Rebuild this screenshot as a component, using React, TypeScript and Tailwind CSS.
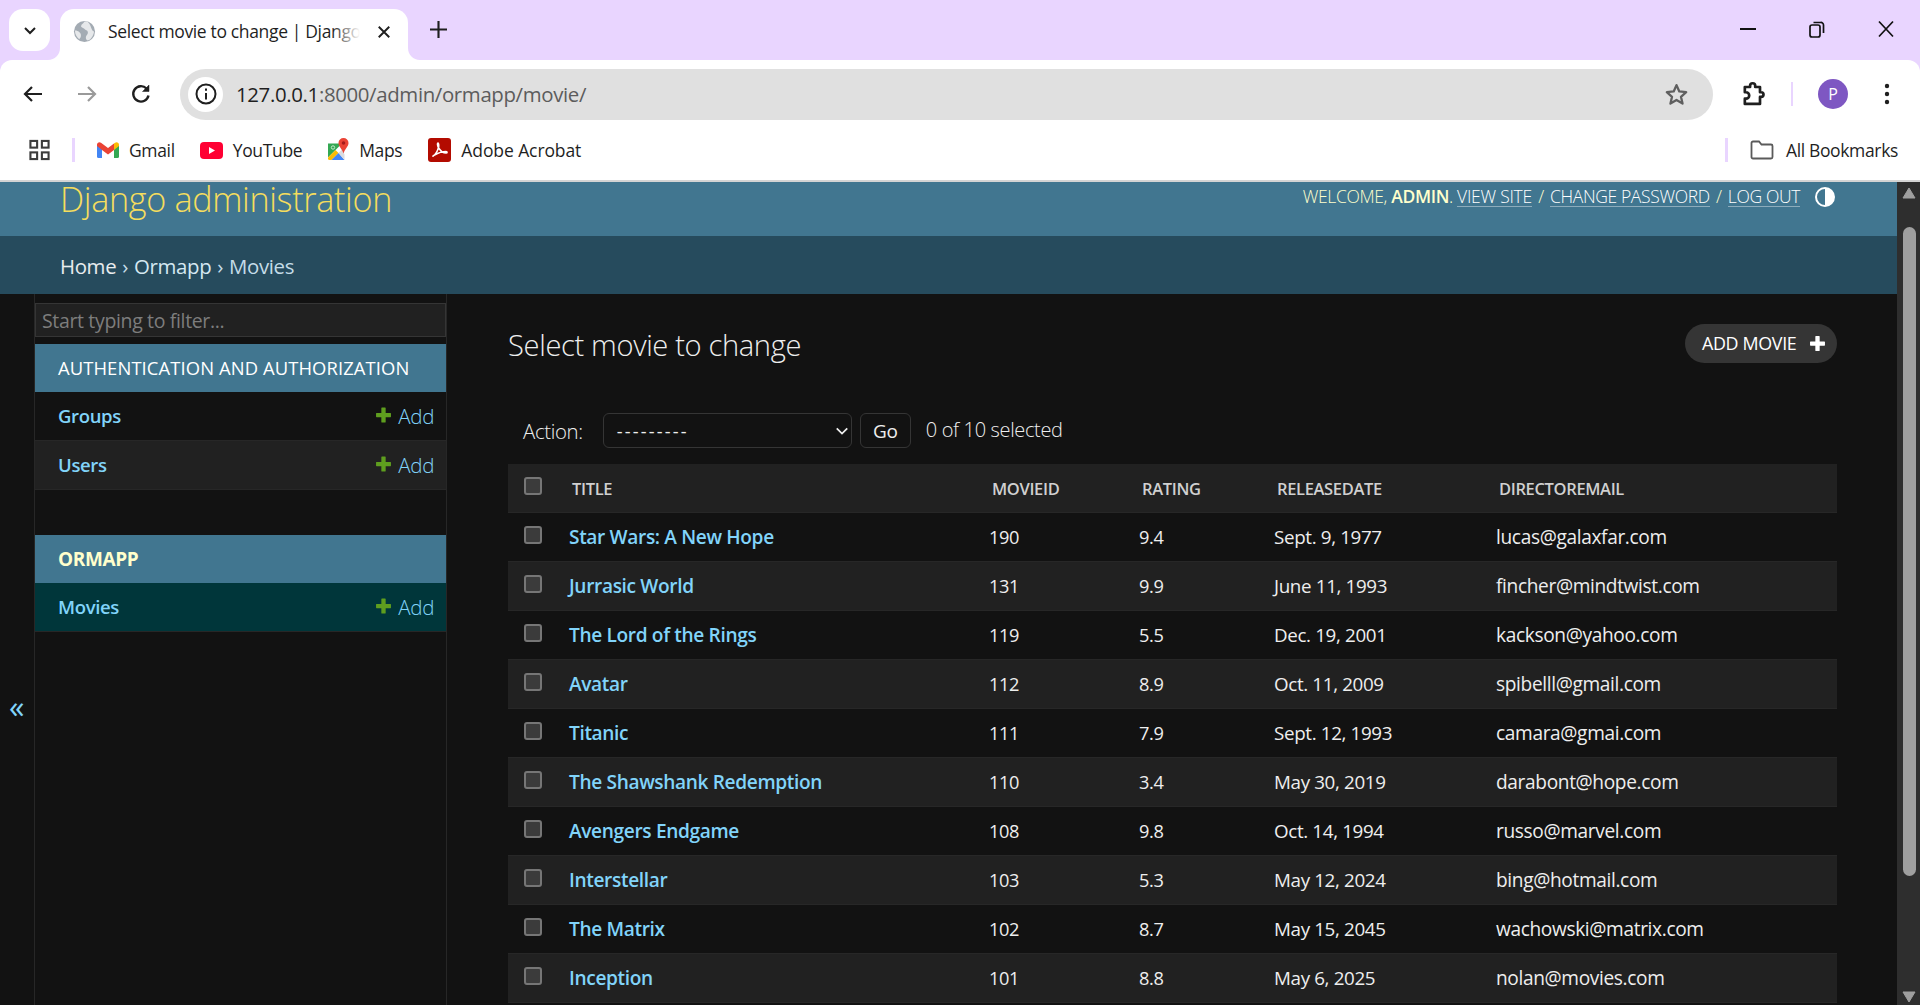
import React from "react";

const movies = [
  ["Star Wars: A New Hope", "190", "9.4", "Sept. 9, 1977", "lucas@galaxfar.com"],
  ["Jurrasic World", "131", "9.9", "June 11, 1993", "fincher@mindtwist.com"],
  ["The Lord of the Rings", "119", "5.5", "Dec. 19, 2001", "kackson@yahoo.com"],
  ["Avatar", "112", "8.9", "Oct. 11, 2009", "spibelll@gmail.com"],
  ["Titanic", "111", "7.9", "Sept. 12, 1993", "camara@gmai.com"],
  ["The Shawshank Redemption", "110", "3.4", "May 30, 2019", "darabont@hope.com"],
  ["Avengers Endgame", "108", "9.8", "Oct. 14, 1994", "russo@marvel.com"],
  ["Interstellar", "103", "5.3", "May 12, 2024", "bing@hotmail.com"],
  ["The Matrix", "102", "8.7", "May 15, 2045", "wachowski@matrix.com"],
  ["Inception", "101", "8.8", "May 6, 2025", "nolan@movies.com"],
];

function Plus({ className, color }: { className: string; color: string }) {
  return (
    <svg viewBox="0 0 16 16" className={className}>
      <path d="M6.500 1.500h3v5h5v3h-5v5h-3v-5h-5v-3h5z" fill={color} stroke={color} strokeLinejoin="round" strokeWidth="1" />
    </svg>
  );
}

function Checkbox() {
  return <span className="block w-[18px] h-[18px] rounded-[3px] bg-[#3b3b3b] border-2 border-[#767676]" />;
}

function NavRow({ label, alt, selected }: { label: string; alt?: boolean; selected?: boolean }) {
  return (
    <div className={`flex items-center justify-between h-[49px] pl-[23px] pr-[12px] border-b border-[#272727] ${selected ? "bg-[#00363a]" : alt ? "bg-[#212121]" : "bg-[#121212]"}`}>
      <span className="text-[#81d4fa] text-[18.5px] font-semibold">{label}</span>
      <span className="flex items-center gap-[6px] text-[#81d4fa] text-[20.5px] font-light">
        <Plus className="w-[17px] h-[18px] -mt-[3px]" color="#5f9e1f" />
        Add
      </span>
    </div>
  );
}

function Bookmark({ icon, label, className }: { icon: React.ReactNode; label: string; className: string }) {
  return (
    <span className={`flex items-center gap-[10px] text-[#1f1f1f] text-[17.5px] ${className}`}>
      {icon}
      {label}
    </span>
  );
}

export default function App() {
  return (
    <div className="h-[1005px] w-[1920px] overflow-hidden flex flex-col bg-[#121212] font-['Open_Sans','Noto_Sans',sans-serif] tracking-[-0.35px]">
      {/* tab strip */}
      <div className="h-[60px] shrink-0 bg-[#e9d5ff] flex items-end relative">
        <div className="absolute left-[9px] top-[9px] w-[41px] h-[42px] rounded-[14px] bg-white flex items-center justify-center">
          <svg viewBox="0 0 16 16" className="w-[16px] h-[16px]" fill="none" stroke="#1f1f1f" strokeWidth="2"><path d="M3 6l5 5 5-5" /></svg>
        </div>
        <div className="ml-[60px] w-[348px] h-[51px] bg-white rounded-t-[14px] flex items-center pl-[13px] relative">
          <svg viewBox="0 0 16 16" className="absolute -left-[12px] bottom-0 w-[12px] h-[12px]"><path d="M16 0v16H0C9 16 16 9 16 0z" fill="#fff" /></svg>
          <svg viewBox="0 0 16 16" className="absolute -right-[12px] bottom-0 w-[12px] h-[12px]"><path d="M0 0v16h16C7 16 0 9 0 0z" fill="#fff" /></svg>
          <svg viewBox="0 0 24 24" className="w-[23px] h-[23px] shrink-0 -mt-[6px]">
            <circle cx="12" cy="12" r="11" fill="#a3abb3" />
            <path d="M12 1.500c-1 2-3 2.500-3.500 4.500S11 8 12 9.500s3 1 3.500 3-1.500 3-2 5 .5 3.500 2 4c3-1 6-5 6.500-9.500-1 0-2-1-2.500-2.500S18 5 16.500 3 14 1.500 12 1.500zM2 11c2 0 3.500.5 5 2s1.500 3 1 5l-1.500 2C4 18 2 15 2 11z" fill="#e6e8ea" />
          </svg>
          <div className="relative w-[252px] ml-[12px] overflow-hidden whitespace-nowrap text-[17.5px] text-[#1f1f1f] -mt-[6px]">
            Select movie to change | Django administration
            <div className="absolute right-0 top-0 bottom-0 w-[28px] bg-gradient-to-r from-transparent to-white" />
          </div>
          <svg viewBox="0 0 16 16" className="w-[14px] h-[14px] ml-[17px] -mt-[6px]" stroke="#1f1f1f" strokeWidth="2.200"><path d="M2 2l12 12M14 2L2 14" /></svg>
        </div>
        <svg viewBox="0 0 16 16" className="absolute left-[430px] top-[21px] w-[17px] h-[17px]" stroke="#1f1f1f" strokeWidth="2"><path d="M8 0v16M0 8h16" /></svg>
        <div className="ml-auto h-full flex items-start pr-[26px] pt-[20px] gap-[53px]">
          <div className="w-[16px] h-[18px] flex items-center"><div className="w-[16px] h-[2px] bg-[#111]" /></div>
          <svg viewBox="0 0 16 18" className="w-[16px] h-[18px]" fill="none" stroke="#111" strokeWidth="1.700"><rect x="1" y="5" width="10" height="12" rx="2" /><path d="M4.500 2.500h7A2.500 2.500 0 0 1 14.500 5v8" /></svg>
          <svg viewBox="0 0 16 18" className="w-[16px] h-[18px]" fill="none" stroke="#111" strokeWidth="1.700"><path d="M1 1.500l14 15M15 1.500l-14 15" /></svg>
        </div>
      </div>

      {/* toolbar */}
      <div className="h-[60px] shrink-0 bg-[#e9d5ff]">
        <div className="h-full bg-white rounded-t-[12px] flex items-center pt-[8px]">
          <svg viewBox="0 0 24 24" className="w-[24px] h-[24px] ml-[21px]" fill="none" stroke="#1f1f1f" strokeWidth="2.200"><path d="M21 12H4M11 5l-7 7 7 7" /></svg>
          <svg viewBox="0 0 24 24" className="w-[24px] h-[24px] ml-[30px]" fill="none" stroke="#9a9a9a" strokeWidth="2.200"><path d="M3 12h17M13 5l7 7-7 7" /></svg>
          <svg viewBox="0 0 24 24" className="w-[24px] h-[24px] ml-[30px]" fill="none" stroke="#1f1f1f" strokeWidth="2.400"><path d="M19.500 13.500A7.700 7.700 0 1 1 17.500 6.500" /><path d="M20 3v6.500h-6.500z" fill="#1f1f1f" strokeWidth="0.500" /></svg>
          <div className="w-[1533px] h-[51px] ml-[27px] rounded-full bg-[#e0e0e0] flex items-center pl-[8px] pr-[24px]">
            <div className="w-[35px] h-[35px] rounded-full bg-white flex items-center justify-center">
              <svg viewBox="0 0 24 24" className="w-[24px] h-[24px]" fill="none" stroke="#1f1f1f" strokeWidth="2"><circle cx="12" cy="12" r="9.500" /><path d="M12 11v6.500" /><path d="M12 6.500v2.200" /></svg>
            </div>
            <span className="ml-[13px] text-[20.4px] text-[#1f1f1f]">127.0.0.1<span className="text-[#5c5c5c]">:8000/admin/ormapp/movie/</span></span>
            <svg viewBox="0 0 24 24" className="w-[25px] h-[25px] ml-auto" fill="none" stroke="#5f5f5f" strokeWidth="2.200" strokeLinejoin="round"><path d="M12 3l2.700 6.100 6.600.7-5 4.400 1.500 6.500L12 17.300l-5.800 3.400 1.500-6.500-5-4.400 6.600-.7z" /></svg>
          </div>
          <svg viewBox="0 0 24 24" className="w-[28px] h-[28px] ml-[26px]" fill="none" stroke="#1f1f1f" strokeWidth="2.300" strokeLinejoin="round"><path d="M5 6h4.500V5a2.200 2.200 0 0 1 4.400 0v1H18v4.500h1a2 2 0 0 1 0 4h-1V20.500H5V16h1a2.500 2.500 0 0 0 0-5.500H5z" /></svg>
          <div className="w-[2px] h-[24px] bg-[#e9d5ff] ml-[24px]" />
          <div className="w-[30px] h-[30px] rounded-full bg-[#7e57c2] text-white text-[16px] flex items-center justify-center ml-[25px]">P</div>
          <svg viewBox="0 0 8 24" className="w-[8px] h-[24px] ml-[35px]" fill="#1f1f1f"><circle cx="4" cy="4" r="2.200" /><circle cx="4" cy="12" r="2.200" /><circle cx="4" cy="20" r="2.200" /></svg>
        </div>
      </div>

      {/* bookmarks */}
      <div className="h-[60px] shrink-0 bg-white flex items-center pl-[29px]">
        <svg viewBox="0 0 22 22" className="w-[21px] h-[22px]" fill="none" stroke="#3c3c3c" strokeWidth="2.200"><rect x="1.500" y="1.500" width="7" height="7" /><rect x="13.500" y="1.500" width="7" height="7" /><rect x="1.500" y="13.500" width="7" height="7" /><rect x="13.500" y="13.500" width="7" height="7" /></svg>
        <div className="w-[3px] h-[24px] bg-[#e9d5ff] ml-[22px]" />
        <Bookmark
          className="ml-[22px]"
          label="Gmail"
          icon={
            <svg viewBox="0 0 22 16" className="w-[22px] h-[16px]">
              <path d="M0 3v11.500A1.500 1.500 0 0 0 1.500 16H5V7z" fill="#4285f4" />
              <path d="M22 3v11.500a1.500 1.500 0 0 1-1.500 1.500H17V7z" fill="#34a853" />
              <path d="M5 8L0 4V2.500C0 .5 2.300-.6 4 .7L11 6l6-4.500V8l-6 4.500z" fill="#ea4335" />
              <path d="M17 1.500L18 .7c1.700-1.300 4-.2 4 1.800V4l-5 4z" fill="#fbbc04" />
            </svg>
          }
        />
        <Bookmark
          className="ml-[25px]"
          label="YouTube"
          icon={
            <svg viewBox="0 0 23 17" className="w-[23px] h-[17px]"><rect width="23" height="17" rx="4" fill="#ff0033" /><path d="M9 5l6 3.500L9 12z" fill="#fff" /></svg>
          }
        />
        <Bookmark
          className="ml-[25px]"
          label="Maps"
          icon={
            <svg viewBox="0 0 22 24" className="w-[22px] h-[24px]">
              <path d="M1 5.500h14l-14 14z" fill="#34a853" />
              <path d="M1 19.500L8.500 12l3 3-7 7H2.500A1.500 1.500 0 0 1 1 20.500z" fill="#fbbc04" />
              <path d="M4.500 22l7-7 6 7z" fill="#4285f4" />
              <path d="M11.500 15l3.500-3.500 2.500 5v5.500z" fill="#dadce0" />
              <circle cx="6" cy="9.500" r="1.700" fill="none" stroke="#c9e7cf" strokeWidth="1" />
              <path d="M16.500 0a5 5 0 0 1 5 5c0 3.500-3.500 5.500-5 10.500C15 10.500 11.500 8.500 11.500 5a5 5 0 0 1 5-5z" fill="#ea4335" />
              <circle cx="16.500" cy="5" r="1.800" fill="#a61c1c" />
            </svg>
          }
        />
        <Bookmark
          className="ml-[26px] tracking-[-0.1px]"
          label="Adobe Acrobat"
          icon={
            <svg viewBox="0 0 23 24" className="w-[23px] h-[24px]">
              <rect width="23" height="24" rx="3" fill="#b30b00" />
              <path d="M5 18c2-1 4.500-5 5.500-8.500.6-2 .2-4.500-.5-4.500s-1 2.500 1 5.500 4 4.500 7 4.500c1.500 0 1.500-1.500 0-1.500-3.500 0-8.500 1.800-11.500 3.500-1.500 1-1.800 1.500-1.500 1z" fill="none" stroke="#fff" strokeWidth="1.500" />
            </svg>
          }
        />
        <div className="w-[3px] h-[24px] bg-[#e9d5ff] ml-auto" />
        <span className="flex items-center gap-[12px] text-[#1f1f1f] text-[17.5px] ml-[22px] mr-[22px]">
          <svg viewBox="0 0 24 20" className="w-[24px] h-[20px]" fill="none" stroke="#5a5a5a" strokeWidth="1.800"><path d="M1.500 3A1.500 1.500 0 0 1 3 1.500h6l2.500 3H21A1.500 1.500 0 0 1 22.500 6v11a1.500 1.500 0 0 1-1.500 1.500H3A1.500 1.500 0 0 1 1.500 17z" /></svg>
          All Bookmarks
        </span>
      </div>

      {/* page */}
      <div className="flex-1 min-h-0 flex border-t-2 border-[#d4d4d4]">
        <div className="flex-1 min-w-0 flex flex-col">
          <header className="h-[54px] shrink-0 bg-[#417690] flex items-start justify-between pl-[60px] pr-[62px]">
            <div className="text-[#f5dd5d] text-[34.2px] font-light leading-[36px] -mt-[1px]">Django administration</div>
            <div className="flex items-center h-[28px] text-[#ffffcc] text-[17.5px] font-light uppercase">
              <span>Welcome, <span className="font-semibold">admin</span>.&nbsp;</span>
              <span className="text-white border-b border-white/40 leading-[20px] tracking-[-0.25px]">View site</span>
              <span className="px-[2px]">&nbsp;/&nbsp;</span>
              <span className="text-white border-b border-white/40 leading-[20px]">Change password</span>
              <span className="px-[2px]">&nbsp;/&nbsp;</span>
              <span className="text-white border-b border-white/40 leading-[20px]">Log out</span>
              <span className="w-[20px] h-[20px] ml-[15px] mt-[2px] rounded-full border-2 border-white bg-gradient-to-r from-transparent from-50% to-white to-50%" />
            </div>
          </header>
          <div className="h-[58px] shrink-0 bg-[#264b5d] flex items-center pl-[60px] pt-[3px] text-[20.4px] text-[#c4dce8]">
            <span className="text-white/90">Home</span>
            <span className="mx-[6px] text-[#c4dce8]">›</span>
            <span className="text-[#d5e8f2]">Ormapp</span>
            <span className="mx-[6px]">›</span>
            <span>Movies</span>
          </div>
          <div className="flex-1 min-h-0 flex">
            {/* toggle */}
            <div className="w-[35px] shrink-0 border-r border-[#272727] flex items-center justify-center">
              <span className="text-[#81d4fa] text-[31px] leading-none mt-[114px] pr-[1px]">«</span>
            </div>
            {/* sidebar */}
            <aside className="w-[412px] shrink-0 border-r border-[#272727] pt-[9px]">
              <div className="h-[34px] bg-[#212121] border border-[#353535] flex items-center pl-[6px] pt-[1px] text-[19.5px] text-[#7d7d7d]">Start typing to filter...</div>
              <div className="h-[48px] mt-[7px] bg-[#417690] flex items-center pl-[23px] text-[18.4px] text-white uppercase tracking-[0.1px]">Authentication and Authorization</div>
              <NavRow label="Groups" />
              <NavRow label="Users" alt />
              <div className="h-[48px] mt-[45px] bg-[#417690] flex items-center pl-[23px] text-[19px] font-bold text-[#ffffcc] uppercase">Ormapp</div>
              <NavRow label="Movies" selected />
            </aside>
            {/* content */}
            <main className="flex-1 min-w-0 pl-[61px] pr-[60px] pt-[30px]">
              <div className="flex items-center justify-between h-[39px]">
                <h1 className="text-[#eeeeee] text-[29.1px] font-light leading-[39px] mt-[3px]">Select movie to change</h1>
                <div className="w-[152px] h-[39px] rounded-full bg-[#353535] flex items-center justify-between pl-[17px] pr-[11px] text-white text-[17.9px] uppercase">
                  Add movie
                  <Plus className="w-[17px] h-[17px]" color="#fff" />
                </div>
              </div>
              <div className="flex items-center h-[35px] mt-[50px] pl-[15px] text-[#eeeeee]">
                <span className="text-[20.4px] font-light mt-[1px]">Action:</span>
                <div className="w-[249px] h-[35px] ml-[20px] rounded-[6px] border border-[#353535] flex items-center justify-between pl-[13px] pr-[2px] pt-[1px] text-[18px] tracking-[2.2px]">
                  ---------
                  <svg viewBox="0 0 16 16" className="w-[14px] h-[14px]" fill="none" stroke="#eee" strokeWidth="2"><path d="M2 5l6 6 6-6" /></svg>
                </div>
                <div className="w-[51px] h-[35px] ml-[8px] rounded-[6px] border border-[#353535] flex items-center justify-center pt-[1px] text-[19px]">Go</div>
                <span className="ml-[15px] text-[20px] font-light -mt-[2px]">0 of 10 selected</span>
              </div>
              <table className="w-full table-fixed border-collapse mt-[16px] text-[19.1px] text-[#eeeeee]">
                <colgroup>
                  <col className="w-[45px]" />
                  <col className="w-[425px]" />
                  <col className="w-[149px]" />
                  <col className="w-[135px]" />
                  <col className="w-[222px]" />
                  <col />
                </colgroup>
                <thead>
                  <tr className="h-[48px] bg-[#212121] border-b border-[#272727] text-left text-[16.5px] font-semibold text-[#d0d0d0] uppercase">
                    <th className="pl-[16px] align-top pt-[13px]"><Checkbox /></th>
                    <th className="pl-[19px] pt-[4px] font-semibold">Title</th>
                    <th className="pl-[14px] pt-[4px] font-semibold">Movieid</th>
                    <th className="pl-[15px] pt-[4px] font-semibold">Rating</th>
                    <th className="pl-[15px] pt-[4px] font-semibold">Releasedate</th>
                    <th className="pl-[15px] pt-[4px] font-semibold">Directoremail</th>
                  </tr>
                </thead>
                <tbody>
                  {movies.map((m, i) => (
                    <tr key={m[1]} className={`h-[49px] border-b border-[#272727] ${i % 2 ? "bg-[#212121]" : "bg-[#121212]"}`}>
                      <td className="pl-[16px] align-top pt-[13px]"><Checkbox /></td>
                      <td className="pl-[16px] pt-[2px] font-semibold text-[#81d4fa]">{m[0]}</td>
                      <td className="pl-[11px] pt-[2px] text-[18.2px]">{m[1]}</td>
                      <td className="pl-[12px] pt-[2px] text-[18.2px]">{m[2]}</td>
                      <td className="pl-[12px] pt-[2px] text-[18.8px]">{m[3]}</td>
                      <td className="pl-[12px] pt-[2px]">{m[4]}</td>
                    </tr>
                  ))}
                </tbody>
              </table>
            </main>
          </div>
        </div>
        {/* scrollbar */}
        <div className="w-[23px] shrink-0 bg-[#2e2e2e] flex flex-col items-center pt-[5px] pb-[2px] pl-[1px]">
          <svg viewBox="0 0 14 12" className="w-[14px] h-[12px] shrink-0"><path d="M7 1l6 10H1z" fill="#9f9f9f" stroke="#9f9f9f" strokeLinejoin="round" /></svg>
          <div className="w-[13px] h-[649px] mt-[28px] rounded-full bg-[#9f9f9f] shrink-0" />
          <svg viewBox="0 0 14 12" className="w-[14px] h-[12px] shrink-0 mt-auto"><path d="M7 11L13 1H1z" fill="#9f9f9f" stroke="#9f9f9f" strokeLinejoin="round" /></svg>
        </div>
      </div>
    </div>
  );
}
